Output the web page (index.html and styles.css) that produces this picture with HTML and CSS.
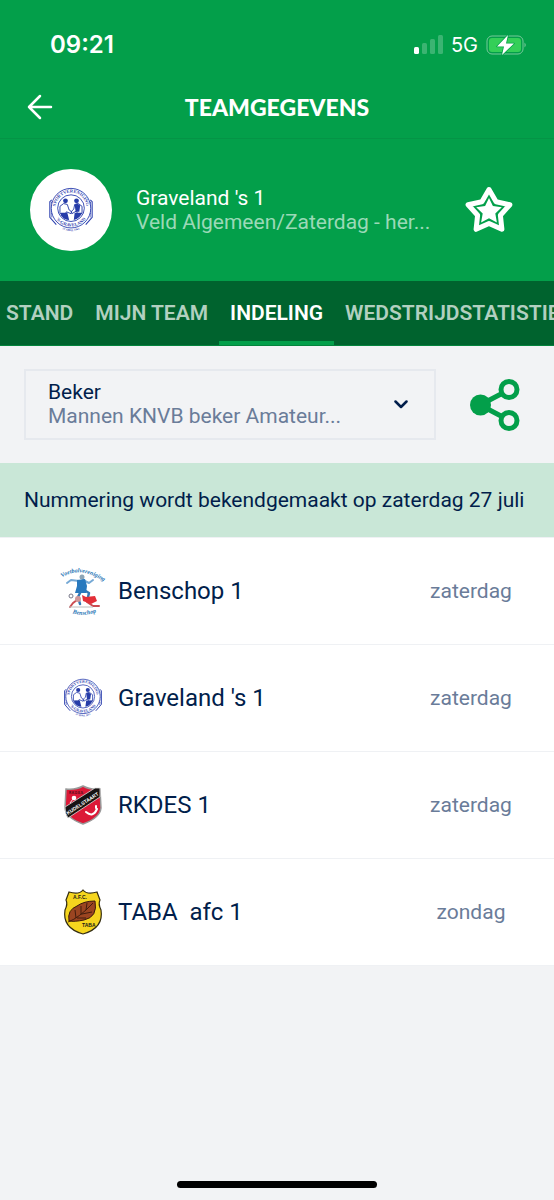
FILE: index.html
```html
<!DOCTYPE html>
<html lang="nl">
<head>
<meta charset="utf-8">
<meta name="viewport" content="width=device-width, initial-scale=1">
<title>Teamgegevens</title>
<link rel="stylesheet" href="styles.css">
</head>
<body>
<svg class="defs" aria-hidden="true">
  <symbol id="graveland" viewBox="-1 0 50 50" overflow="visible">
    <g fill="none" stroke="#3044b0">
      <path d="M3 14 1 16V33L8 41M45 14 47 16V33L40 41" stroke-width="1.2"/>
      <path d="M3 16V33M45 16V33" stroke-width="1.5" stroke-dasharray="1 1"/>
      <circle cx="24" cy="23" r="21.5" stroke-width="1" fill="#fff"/>
      <circle cx="24" cy="23" r="14.5" stroke-width="1"/>
    </g>
    <path id="arc-top" d="M9 31A17 17 0 1 1 39 31" fill="none"/>
    <path id="arc-bottom" d="M4 26A20 20 0 0 0 44 26" fill="none" transform="translate(0 -3)"/>
    <path id="arc-date" d="M6 40Q24 56 42 40" fill="none"/>
    <g fill="#3044b0" font-family="Liberation Serif, serif" font-weight="700" text-anchor="middle">
      <text font-size="5"><textPath href="#arc-top" startOffset="50%">SPORTVERENIGING</textPath></text>
      <text font-size="5"><textPath href="#arc-bottom" startOffset="50%">'S-GRAVELAND</textPath></text>
      <text font-size="3"><textPath href="#arc-date" startOffset="50%">27 APRIL 1961</textPath></text>
    </g>
    <g fill="#263ca8">
      <circle cx="18" cy="15" r="2.6"/><circle cx="30" cy="15" r="2.6"/>
      <path d="M12 21 16 18 20 19 22 25 25 27 24 29 19 27 18 29H12ZM36 21 32 18 28 19 27 24 24 27 25 29 30 26 31 29H36Z" fill="#fff" stroke="#263ca8" stroke-width="1"/>
      <path d="M13 28H20L22 36Q17 36 13 31ZM28 28H36Q34 34 27 36ZM28 19 31 18 34 20 33 27H29Z"/>
    </g>
  </symbol>
</svg>

<div class="app">
  <header class="header">
    <div class="status">
      <span class="time">09:21</span>
      <div class="status-right">
        <svg class="signal" viewBox="0 0 29 19" aria-hidden="true" fill="#fff">
          <rect y="12" width="5" height="7" rx="1.5"/>
          <g opacity=".22"><rect x="8" y="8" width="5" height="11" rx="1.5"/><rect x="16" y="4" width="5" height="15" rx="1.5"/><rect x="24" width="5" height="19" rx="1.5"/></g>
        </svg>
        <span class="network">5G</span>
        <svg class="battery" viewBox="0 0 41 22" aria-hidden="true">
          <rect x="1" y="2" width="36" height="18" rx="5" fill="none" stroke="#76c99a"/>
          <rect x="3" y="4" width="32" height="14" rx="3" fill="#34cf58"/>
          <path d="M38.500 8.500Q41 11 38.500 13.500Z" fill="#76c99a"/>
          <path d="M22 1 11 12.500H18L16 21 28 9.500H20Z" fill="#fff" stroke="#039f4a" stroke-width="1.500" stroke-linejoin="round" paint-order="stroke"/>
        </svg>
      </div>
    </div>
    <div class="navbar">
      <button class="icon-button" type="button" aria-label="Terug">
        <svg class="back" viewBox="0 0 26 26" fill="none" stroke="#fff" stroke-width="2.500" stroke-linecap="round" stroke-linejoin="round"><path d="M13 2 2 13 13 24M2 13H24"/></svg>
      </button>
      <h1 class="title">TEAMGEGEVENS</h1>
    </div>
    <section class="team">
      <div class="avatar"><svg class="avatar-logo" role="img" aria-label="Graveland"><use href="#graveland"/></svg></div>
      <div class="team-text">
        <div class="team-name">Graveland 's 1</div>
        <div class="team-sub">Veld Algemeen/Zaterdag - her...</div>
      </div>
      <button class="icon-button" type="button" aria-label="Favoriet">
        <svg class="star" viewBox="0 0 50 50" fill="none" stroke-linejoin="round">
          <path d="M25 4.500 32.100 16.800 45.900 19.700 36.400 30.200 37.900 44.300 25 38.500 12.100 44.300 13.600 30.200 4.100 19.700 17.900 16.800Z" stroke="#fff" stroke-width="5"/>
          <path d="M25 13 28.900 21.100 37.800 22.300 31.300 28.600 32.900 37.400 25 33.200 17.100 37.400 18.700 28.600 12.200 22.300 21.100 21.100Z" fill="#fff"/>
        </svg>
      </button>
    </section>
    <nav class="tabs">
      <a class="tab" href="#stand">STAND</a>
      <a class="tab" href="#team">MIJN TEAM</a>
      <a class="tab active" href="#indeling" aria-current="page">INDELING</a>
      <a class="tab" href="#statistieken">WEDSTRIJDSTATISTIEKEN</a>
    </nav>
  </header>

  <main>
    <div class="filter">
      <div class="dropdown">
        <label class="dropdown-label" for="competition">Beker</label>
        <select class="dropdown-select" id="competition"><option>Mannen KNVB beker Amateur...</option></select>
        <svg class="chevron" viewBox="0 0 14 9" aria-hidden="true" fill="none" stroke="#011e4b" stroke-width="2.500" stroke-linecap="round" stroke-linejoin="round"><path d="M1.500 1.500 7 7 12.500 1.500"/></svg>
      </div>
      <button class="icon-button" type="button" aria-label="Delen">
        <svg class="share" viewBox="0 0 50 54" fill="none" stroke="#039f4a" stroke-width="5">
          <path d="M10 27 31 16M10 27 31 38"/><circle cx="10.500" cy="27" r="10.500" fill="#039f4a" stroke="none"/>
          <circle cx="39" cy="11.500" r="8"/><circle cx="39" cy="42.500" r="8"/>
        </svg>
      </button>
    </div>
    <p class="notice">Nummering wordt bekendgemaakt op zaterdag 27 juli</p>
    <ul class="list">
      <li class="row">
        <svg class="logo" viewBox="0 0 48 52" role="img" aria-label="Benschop">
          <path id="ben-top" d="M1 14Q20 -1 47 18" fill="none"/>
          <path id="ben-bottom" d="M10 47Q24 53 41 46" fill="none"/>
          <g fill="#2372b4" font-family="Liberation Serif, serif" font-style="italic" font-weight="700" font-size="6" text-anchor="middle">
            <text><textPath href="#ben-top" startOffset="50%">Voetbalvereniging</textPath></text>
            <text><textPath href="#ben-bottom" startOffset="50%">Benschop</textPath></text>
          </g>
          <g fill="none" stroke-linecap="round" stroke-linejoin="round">
            <path d="M20 16 12 15 8 18M24 15 30 18 34 15" stroke="#76a9d5" stroke-width="2"/>
            <path d="M22 26 19 32 21 39M25 25 30 28 29 32" stroke="#3479b6" stroke-width="2.500"/>
            <path d="M18 35 14 38 11 42M28 37 34 41 40 41" stroke="#cb4b51" stroke-width="2"/>
          </g>
          <circle cx="23" cy="12" r="2.500" fill="#8da5b6"/>
          <path d="M18 15 26 14 28 21 27 28 16 28 18 21Z" fill="#2879be"/>
          <path d="M23 30 27 32 36 31 38 36 32 39 24 36Z" fill="#e32f38"/>
          <circle cx="19" cy="34" r="3" fill="#d19899"/><circle cx="12" cy="31" r="2" fill="#fff" stroke="#778" stroke-width="1"/>
          <path d="M10 42H34" stroke="#bcbcbc" stroke-width="1"/>
        </svg>
        <span class="name">Benschop 1</span><span class="day">zaterdag</span>
      </li>
      <li class="row">
        <svg class="logo logo-round" role="img" aria-label="Graveland"><use href="#graveland"/></svg>
        <span class="name">Graveland 's 1</span><span class="day">zaterdag</span>
      </li>
      <li class="row">
        <svg class="logo" viewBox="0 0 48 52" role="img" aria-label="RKDES">
          <path d="M7 10Q17 11 24 7 31 11 41 10L42 29Q41 39 24 45 7 39 6 29Z" fill="#dc1937" stroke="#999" stroke-width="1.500"/>
          <path d="M6 28 36 9H41V18L9 39Q6 35 6 28Z" fill="#161313" stroke="#ddd" stroke-width=".8"/>
          <text transform="translate(9 36) rotate(-33)" fill="#fff" font-family="Liberation Sans, sans-serif" font-weight="700" font-size="5">KUDELSTAART</text>
          <text x="10" y="14.500" fill="#421018" font-family="Liberation Sans, sans-serif" font-weight="700" font-size="3">R.K.D.E.S.</text>
          <circle cx="15" cy="19" r="2.300" fill="#fff"/><path d="M14 20 11 24" stroke="#eee"/>
          <path d="M27 33Q34 39 38 30M37 27V29" fill="none" stroke="#fff" stroke-width="2" stroke-linecap="round"/>
        </svg>
        <span class="name">RKDES 1</span><span class="day">zaterdag</span>
      </li>
      <li class="row">
        <svg class="logo" viewBox="0 0 48 52" role="img" aria-label="TABA">
          <path d="M24 4Q28 9 38 6L41 14Q39 18 42 24 45 42 24 48 3 42 6 24 9 18 7 14L10 6Q20 9 24 4Z" fill="#f5d51e" stroke="#332c12" stroke-width="1.200"/>
          <g font-family="Liberation Sans, sans-serif" font-weight="700" font-size="5" fill="#171717"><text x="14" y="13">A.F.C.</text><text x="23" y="41">TABA</text></g>
          <path d="M10 35Q8 24 18 20 25 15 36 15 39 31 25 34 15 36 10 35Z" fill="#9b4521" stroke="#39190b" stroke-width="1"/>
          <path d="M9 36Q20 32 34 17M17 32 16 24M22 29 22 20M27 24 28 17M18 32 27 32M23 28 33 26" fill="none" stroke="#39190b" stroke-width=".9"/>
        </svg>
        <span class="name">TABA&nbsp; afc 1</span><span class="day">zondag</span>
      </li>
    </ul>
  </main>
  <div class="home-bar"></div>
</div>
</body>
</html>
```
FILE: styles.css
```css
* { box-sizing: border-box; }

body {
  margin: 0;
  background: #f2f3f5;
  color: #011e4b;
  font-family: Roboto, "Liberation Sans", sans-serif;
  font-size: 21px;
  line-height: 24px;
}

.defs { position: absolute; width: 0; height: 0; }
.app { display: flex; flex-direction: column; min-height: 100vh; overflow: hidden; }
.header { background: #039f4a; color: #fff; }

.status {
  display: flex;
  align-items: center;
  justify-content: space-between;
  height: 75px;
  padding: 14px 27px 0 50px;
}
.time { font-family: Inter, sans-serif; font-weight: 600; font-size: 24px; }
.status-right { display: flex; align-items: center; gap: 8px; }
.network { font-family: Inter, sans-serif; font-size: 20px; }
.signal { width: 29px; height: 19px; }
.battery { width: 41px; height: 22px; }

.icon-button { display: flex; padding: 0; border: 0; background: none; cursor: pointer; }

.navbar {
  display: grid;
  grid-template-columns: 1fr auto 1fr;
  align-items: center;
  height: 64px;
  padding: 0 27px;
  border-bottom: 1px solid #049446;
}
.back { width: 26px; height: 26px; }
.title { margin: 0; font-family: Lato, sans-serif; font-size: 23px; font-weight: 900; }

.team { display: flex; align-items: center; height: 142px; padding: 0 40px 0 30px; }
.avatar {
  display: flex;
  flex: none;
  align-items: center;
  justify-content: center;
  width: 82px;
  height: 82px;
  border-radius: 50%;
  background: #fff;
}
.avatar-logo { width: 46px; height: 46px; overflow: visible; }
.team-text { flex: 1; min-width: 0; padding-left: 24px; }
.team-sub { color: #9bd9b7; white-space: nowrap; }
.star { width: 50px; height: 50px; }

.tabs {
  display: flex;
  height: 65px;
  margin-left: -5px;
  border-bottom: 1px solid #04843d;
  background: #00632e;
  overflow: hidden;
}
.tab {
  flex: none;
  padding: 20px 11px 0;
  border-bottom: 4px solid transparent;
  color: #b2d0c0;
  font-weight: 600;
  text-decoration: none;
}
.active { border-color: #039f4a; color: #fff; }

.filter { display: flex; align-items: center; gap: 34px; padding: 23px 34px 23px 24px; }
.dropdown {
  display: grid;
  flex: 1;
  grid-template-columns: 1fr auto;
  align-items: center;
  padding: 9px 26px 10px 22px;
  border: 2px solid #e6e9ee;
}
.dropdown-label { grid-area: 1 / 1; }
.dropdown-select {
  grid-area: 2 / 1;
  appearance: none;
  min-width: 0;
  margin: 0;
  padding: 0;
  border: 0;
  background: none;
  color: #6a7c99;
  font: inherit;
}
.chevron { grid-area: 1 / 2 / 3 / 3; width: 14px; height: 9px; }
.share { width: 50px; height: 54px; }

.notice { margin: 0; padding: 25px 24px; border-bottom: 1px solid #eff1f4; background: #c9e7d7; }

.list { margin: 0; padding: 0; list-style: none; background: #fff; }
.row {
  display: flex;
  align-items: center;
  height: 107px;
  padding: 0 24px 0 59px;
  border-bottom: 1px solid #eff1f4;
}
.logo { flex: none; width: 48px; height: 52px; overflow: visible; }
.logo-round { width: 40px; height: 40px; margin: 0 4px; }
.name { flex: 1; padding-left: 11px; font-size: 24px; }
.day { width: 118px; color: #6a7c99; text-align: center; }

.home-bar {
  width: 36%;
  height: 7px;
  margin: auto auto 12px;
  border-radius: 4px;
  background: #000;
}
```
